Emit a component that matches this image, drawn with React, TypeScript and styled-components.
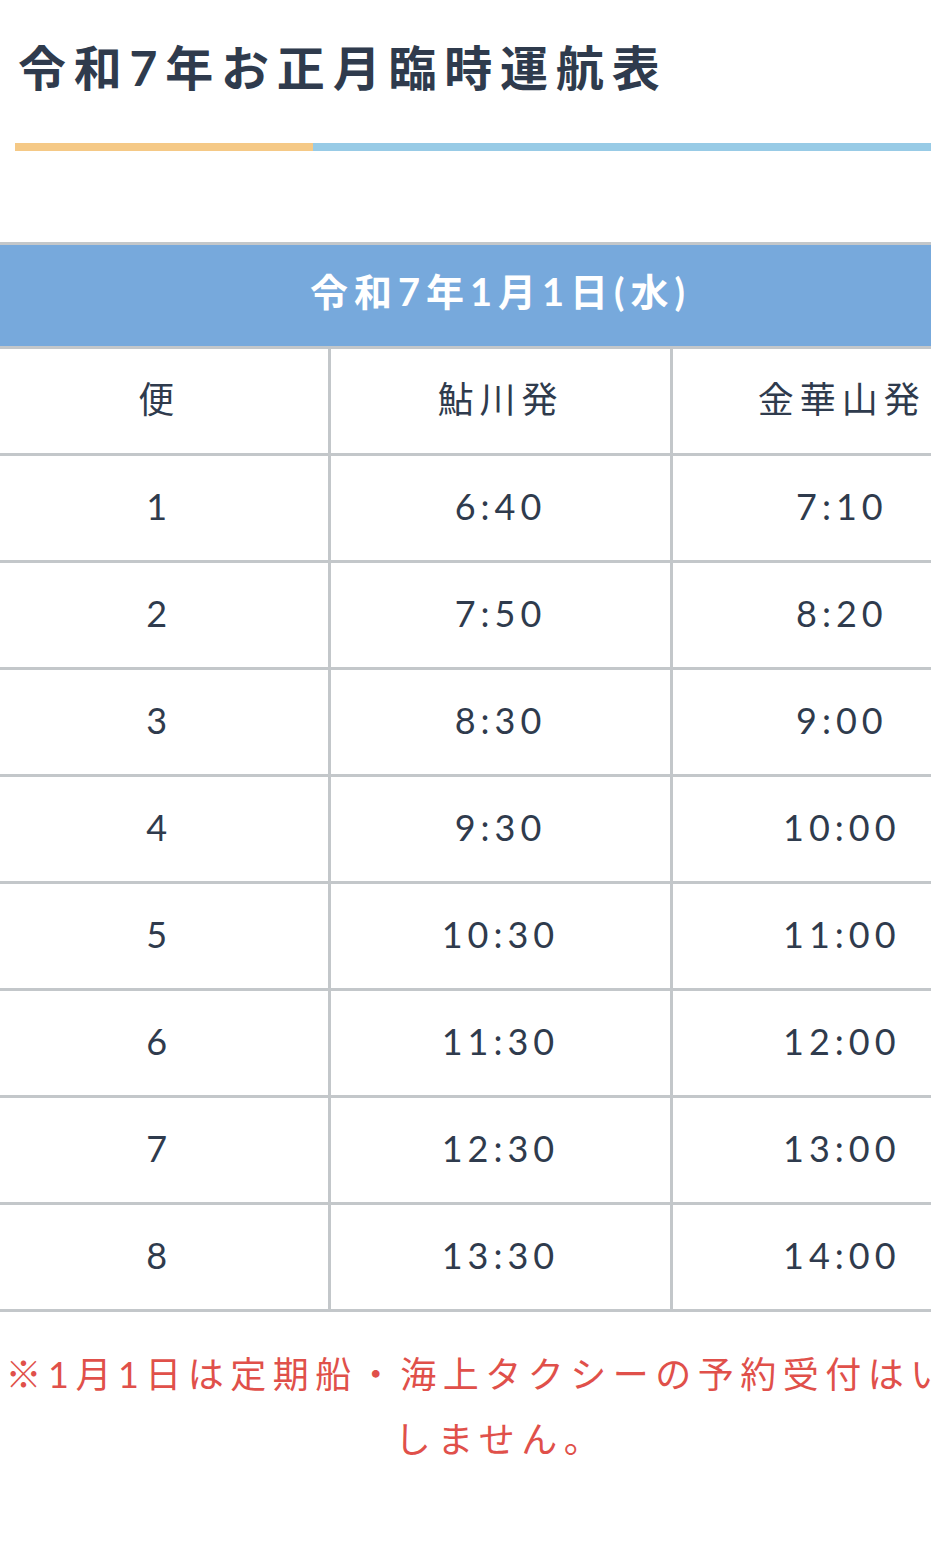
import React from 'react'
import styled, { createGlobalStyle } from 'styled-components'

const GlobalStyle = createGlobalStyle`
  html, body {
    margin: 0;
    padding: 0;
    background: #fff;
  }
  body {
    font-family: Lato, 'Noto Sans CJK JP', sans-serif;
    color: #2f3b4d;
  }
`

const Page = styled.div`
  width: 931px;
  overflow: hidden;
  padding-bottom: 60px;
`

const Title = styled.h1`
  margin: 0;
  padding: 34px 0 0 18px;
  font-size: 48px;
  line-height: 67px;
  font-weight: 700;
  letter-spacing: 7.8px;
  color: #2f3b4d;
  white-space: nowrap;
`

const Rule = styled.div`
  display: flex;
  height: 8px;
  margin: 42px 0 0 15px;
`

const RuleSegment = styled.div<{ $color: string; $grow?: boolean }>`
  background: ${(p) => p.$color};
  flex: ${(p) => (p.$grow ? '1 0 0' : '0 0 298px')};
`

const Inner = styled.div`
  width: 1027px;
  margin: 91px 0 0 -13px;
`

const Table = styled.table`
  width: 100%;
  border-collapse: collapse;
  table-layout: fixed;

  td,
  th {
    border: 3px solid #c3c7ca;
    text-align: center;
    padding: 0;
  }
`

// cell heights below exclude the bottom padding that nudges the text up
const DayHeader = styled.th`
  height: 89px;
  background: #77a9dc;
  color: #fff;
  font-size: 38px;
  font-weight: 700;
  letter-spacing: 6px;

  && {
    padding-bottom: 12px;
  }
`

const ColHead = styled.td`
  height: 96px;
  font-size: 36px;
  font-weight: 400;
  letter-spacing: 6px;
  color: #2f3b4d;

  && {
    padding-bottom: 8px;
  }
`

const Cell = styled.td`
  height: 99px;
  font-size: 36px;
  letter-spacing: 5px;
  color: #2f3b4d;

  && {
    padding-bottom: 5px;
  }
`

const Note = styled.p`
  margin: 30px 0 0;
  text-align: center;
  font-size: 36px;
  line-height: 65px;
  letter-spacing: 6.5px;
  color: #e0504a;
  white-space: nowrap;
`

const rows = [
  ['1', '6:40', '7:10'],
  ['2', '7:50', '8:20'],
  ['3', '8:30', '9:00'],
  ['4', '9:30', '10:00'],
  ['5', '10:30', '11:00'],
  ['6', '11:30', '12:00'],
  ['7', '12:30', '13:00'],
  ['8', '13:30', '14:00'],
]

export default function App() {
  return (
    <Page>
      <GlobalStyle />
      <Title>令和7年お正月臨時運航表</Title>
      <Rule>
        <RuleSegment $color="#f5c986" />
        <RuleSegment $color="#98cbe6" $grow />
      </Rule>
      <Inner>
        <Table>
          <thead>
            <tr>
              <DayHeader colSpan={3}>令和7年1月1日(水)</DayHeader>
            </tr>
          </thead>
          <tbody>
            <tr>
              <ColHead>便</ColHead>
              <ColHead>鮎川発</ColHead>
              <ColHead>金華山発</ColHead>
            </tr>
            {rows.map((r) => (
              <tr key={r[0]}>
                {r.map((v, i) => (
                  <Cell key={i}>{v}</Cell>
                ))}
              </tr>
            ))}
          </tbody>
        </Table>
        <Note>
          ※1月1日は定期船・海上タクシーの予約受付はいた
          <br />
          しません。
        </Note>
      </Inner>
    </Page>
  )
}
